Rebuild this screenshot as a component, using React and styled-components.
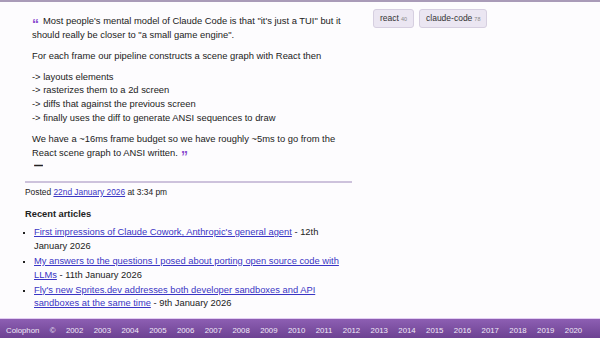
import React from "react";
import styled, { createGlobalStyle } from "styled-components";

const Global = createGlobalStyle`
  html, body { margin: 0; padding: 0; }
  body {
    background: #fdfcfe;
    font-family: "Liberation Sans", Arial, sans-serif;
    color: #222;
    overflow: hidden;
  }
`;

const Page = styled.div`
  border-top: 2px solid #a99bb8;
  width: 600px;
  height: 336px;
  display: flex;
  flex-direction: column;
`;

const Main = styled.div`
  flex: 1;
  display: flex;
  padding-left: 25px;
`;

const Column = styled.div`
  width: 327px;
`;

const Sidebar = styled.aside`
  margin-left: 21px;
  padding-top: 7px;
  display: flex;
  gap: 5px;
  align-items: flex-start;
`;

const Tag = styled.a`
  display: inline-flex;
  align-items: baseline;
  gap: 2px;
  height: 17px;
  line-height: 17px;
  padding: 0 6px;
  background: #ebe6f2;
  border: 1px solid #d6cfe0;
  border-radius: 3px;
  font-size: 8.5px;
  color: #333;
  text-decoration: none;
`;

const Count = styled.span`
  font-size: 5.5px;
  color: #888;
`;

const Quote = styled.blockquote`
  margin: 12px 0 0 7px;
  padding: 0;
`;

const P = styled.p`
  font-size: 9.4px;
  line-height: 13.7px;
  margin: 0 0 7.3px;
  &:last-of-type { margin-bottom: 0; }
`;

const Mark = styled.span`
  font-family: "Liberation Sans", Arial, sans-serif;
  font-weight: bold;
  font-size: 14px;
  line-height: 0;
  vertical-align: -5px;
  color: #8a4fcf;
  margin-right: ${(p) => (p.$open ? "4px" : "0")};
  margin-left: ${(p) => (p.$open ? "0" : "3px")};
`;

const Dash = styled.div`
  font-size: 9px;
  font-weight: bold;
  line-height: 13.7px;
  margin-top: 1px;
  padding-left: 2px;
  transform: scaleY(1.6);
`;

const Divider = styled.hr`
  border: 0;
  height: 2px;
  background: #cdc2dc;
  margin: 7px 0 3px;
`;

const Meta = styled.p`
  font-size: 8.4px;
  line-height: 12px;
  margin: 0;
`;

const Link = styled.a`
  color: #3a35c4;
  text-decoration: underline;
`;

const Heading = styled.h3`
  font-size: 9.3px;
  line-height: 13px;
  font-weight: bold;
  margin: 10px 0 5px;
`;

const List = styled.ul`
  list-style: square;
  margin: 0;
  padding-left: 9px;
`;

const Item = styled.li`
  font-size: 9.35px;
  line-height: 13.7px;
  margin-bottom: 1.5px;
  &::marker { font-size: 7px; }
`;

const Footer = styled.footer`
  height: 20px;
  background: linear-gradient(#8d5fb3, #6d4292);
  border-top: 1px solid #e3cdf3;
  display: flex;
  align-items: center;
  gap: 10.4px;
  padding: 3px 0 0 6px;
  box-sizing: border-box;
  font-size: 7.8px;
  color: #f1eaf8;
`;

const FooterLink = styled.span`
  white-space: nowrap;
`;

const years = [];
for (let y = 2002; y <= 2020; y++) years.push(y);

const articles = [
  { title: "First impressions of Claude Cowork, Anthropic's general agent", date: "12th January 2026" },
  { title: "My answers to the questions I posed about porting open source code with LLMs", date: "11th January 2026" },
  { title: "Fly's new Sprites.dev addresses both developer sandboxes and API sandboxes at the same time", date: "9th January 2026" },
];

export default function App() {
  return (
    <>
      <Global />
      <Page>
        <Main>
          <Column>
            <Quote>
              <P>
                <Mark $open>“</Mark>Most people's mental model of Claude Code is that "it's just a TUI" but it should really be closer to "a small game engine".
              </P>
              <P>For each frame our pipeline constructs a scene graph with React then</P>
              <P>
                -&gt; layouts elements<br />
                -&gt; rasterizes them to a 2d screen<br />
                -&gt; diffs that against the previous screen<br />
                -&gt; finally uses the diff to generate ANSI sequences to draw
              </P>
              <P>
                We have a ~16ms frame budget so we have roughly ~5ms to go from the React scene graph to ANSI written.<Mark>”</Mark>
              </P>
              <Dash>—</Dash>
            </Quote>
            <Divider />
            <Meta>
              Posted <Link href="#">22nd January 2026</Link> at 3:34 pm
            </Meta>
            <Heading>Recent articles</Heading>
            <List>
              {articles.map((a) => (
                <Item key={a.title}>
                  <Link href="#">{a.title}</Link> - {a.date}
                </Item>
              ))}
            </List>
          </Column>
          <Sidebar>
            <Tag href="#">react <Count>40</Count></Tag>
            <Tag href="#">claude-code <Count>78</Count></Tag>
          </Sidebar>
        </Main>
        <Footer>
          <FooterLink>Colophon</FooterLink>
          <FooterLink>©</FooterLink>
          {years.map((y) => (
            <FooterLink key={y}>{y}</FooterLink>
          ))}
        </Footer>
      </Page>
    </>
  );
}
